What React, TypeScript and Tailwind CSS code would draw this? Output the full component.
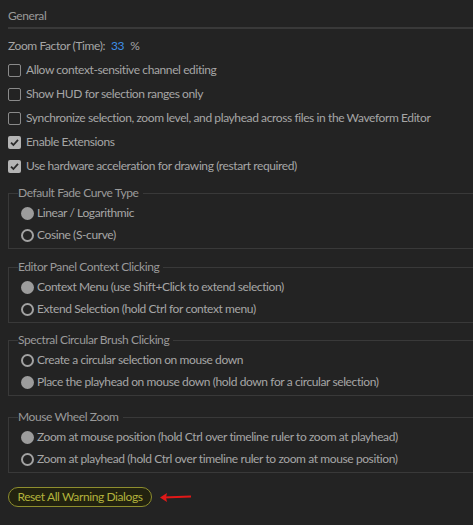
import React from "react";

const font = { fontFamily: "Lato, 'Noto Sans', sans-serif" };

const Checkbox = ({ checked, label }: { checked?: boolean; label: string }) => (
  <div className="h-6 flex items-center">
    <div
      className={`w-[13px] h-[13px] rounded-[2px] flex items-center justify-center shrink-0 ${
        checked ? "bg-[#b4b4b4]" : "border border-[#8a8a8a]"
      }`}
    >
      {checked && (
        <svg width="11" height="11" viewBox="0 0 11 11">
          <path d="M2 5.6 L4.4 8 L9 2.8" fill="none" stroke="#2a2a2a" strokeWidth="1.8" />
        </svg>
      )}
    </div>
    <span className="ml-[5px] text-[#a6a6a6]">{label}</span>
  </div>
);

const Radio = ({ checked, label }: { checked?: boolean; label: string }) => (
  <div className="h-[22px] flex items-center pl-3">
    <div
      className={`w-[13px] h-[13px] rounded-full shrink-0 ${
        checked ? "bg-[#9c9c9c]" : "border-2 border-[#a2a2a2]"
      }`}
    />
    <span className="ml-[3px] text-[#a6a6a6]">{label}</span>
  </div>
);

const Group = ({
  title,
  options,
  selected,
  className = "",
}: {
  title: string;
  options: string[];
  selected: number;
  className?: string;
}) => (
  <fieldset className={`ml-2 w-[480px] border border-[#393939] pb-[2px] ${className}`}>
    <legend className="ml-[9px] pr-1 leading-4 text-[#9a9a9a]">{title}</legend>
    <div className="pt-[1px]">
      {options.map((o, i) => (
        <Radio key={o} label={o} checked={i === selected} />
      ))}
    </div>
  </fieldset>
);

export default function App() {
  return (
    <div
      className="w-[473px] h-[525px] overflow-hidden bg-[#232323] text-[12px] leading-4 tracking-[-0.4px]"
      style={font}
    >
      {/* header */}
      <div className="ml-2 pt-2 pb-[3px] border-b-2 border-[#393939] text-[#9a9a9a]">General</div>

      <div className="pl-2 mt-[5px]">
        <div className="h-6 flex items-center text-[#a6a6a6]">
          Zoom Factor (Time):
          <span className="ml-[6px] text-[#3d8ee6]">33</span>
          <span className="ml-[6px]">%</span>
        </div>
        <Checkbox label="Allow context-sensitive channel editing" />
        <Checkbox label="Show HUD for selection ranges only" />
        <Checkbox label="Synchronize selection, zoom level, and playhead across files in the Waveform Editor" />
        <Checkbox checked label="Enable Extensions" />
        <Checkbox checked label="Use hardware acceleration for drawing (restart required)" />
      </div>

      <Group
        className="mt-[7px]"
        title="Default Fade Curve Type"
        options={["Linear / Logarithmic", "Cosine (S-curve)"]}
        selected={0}
      />
      <Group
        className="mt-[10px]"
        title="Editor Panel Context Clicking"
        options={[
          "Context Menu (use Shift+Click to extend selection)",
          "Extend Selection (hold Ctrl for context menu)",
        ]}
        selected={0}
      />
      <Group
        className="mt-[9px]"
        title="Spectral Circular Brush Clicking"
        options={[
          "Create a circular selection on mouse down",
          "Place the playhead on mouse down (hold down for a circular selection)",
        ]}
        selected={1}
      />
      <Group
        className="mt-[13px]"
        title="Mouse Wheel Zoom"
        options={[
          "Zoom at mouse position (hold Ctrl over timeline ruler to zoom at playhead)",
          "Zoom at playhead (hold Ctrl over timeline ruler to zoom at mouse position)",
        ]}
        selected={0}
      />

      <div className="mt-[14px] ml-2 flex items-center">
        <button
          type="button"
          className="h-5 w-[144px] rounded-full border border-[#8e8e2e] bg-[#22220f] text-[#b2b23c] leading-4"
        >
          Reset All Warning Dialogs
        </button>
        <svg width="34" height="12" viewBox="0 0 34 12" className="ml-[7px]">
          <path d="M32 5.5 L4 6.5" stroke="#e01818" strokeWidth="2" fill="none" />
          <path d="M1 6.5 L8 2 L7 6.5 L8 11 Z" fill="#e01818" />
        </svg>
      </div>
    </div>
  );
}
